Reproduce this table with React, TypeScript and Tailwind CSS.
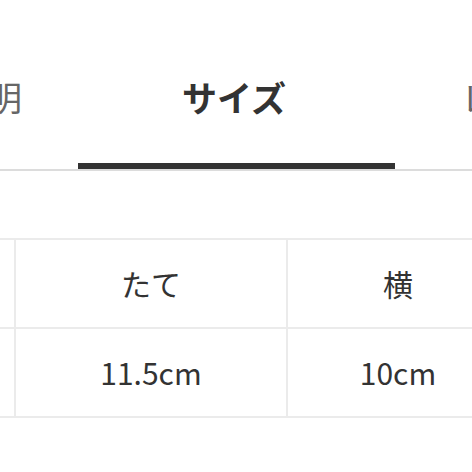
const font = { fontFamily: '"Noto Sans CJK JP", "Noto Sans", sans-serif' };

function Tabs() {
  return (
    <div className="flex border-b-2 border-[#dcdcdc]">
      {/* previous tab, mostly cut off on the left */}
      <div className="shrink-0 w-[78px] flex flex-col items-end">
        <div className="pt-[80px] pr-[56px] text-[34px] leading-[34px] text-[#666] whitespace-nowrap">商品説明</div>
        <div className="mt-[49px] h-[6px]" />
      </div>

      {/* active tab */}
      <div className="shrink-0 w-[317px] flex flex-col">
        <div className="pt-[80px] pr-[5px] text-center text-[35px] leading-[34px] font-bold text-[#333]">サイズ</div>
        <div className="mt-[49px] h-[6px] bg-[#333]" />
      </div>

      {/* next tab, cut off on the right */}
      <div className="shrink-0 flex flex-col">
        <div className="pt-[80px] pl-[66px] text-[34px] leading-[34px] text-[#666] whitespace-nowrap">レビュー</div>
        <div className="mt-[49px] h-[6px]" />
      </div>
    </div>
  );
}

function SizeTable() {
  const cell = "bg-white h-[87px] flex items-center justify-center text-[30px] text-[#333] whitespace-nowrap";
  return (
    <div className="mt-[67px] -ml-[88px] w-max">
      <div className="grid grid-cols-[100px_270px_220px] gap-[2px] p-[2px] bg-[#ebebeb]">
        <div className={cell}></div>
        <div className={cell}>たて</div>
        <div className={cell}>横</div>
        <div className={cell}></div>
        <div className={cell}>11.5cm</div>
        <div className={cell}>10cm</div>
      </div>
    </div>
  );
}

export default function App() {
  return (
    <div className="w-[472px] h-[472px] overflow-hidden bg-white" style={font}>
      <Tabs />
      <SizeTable />
    </div>
  );
}
